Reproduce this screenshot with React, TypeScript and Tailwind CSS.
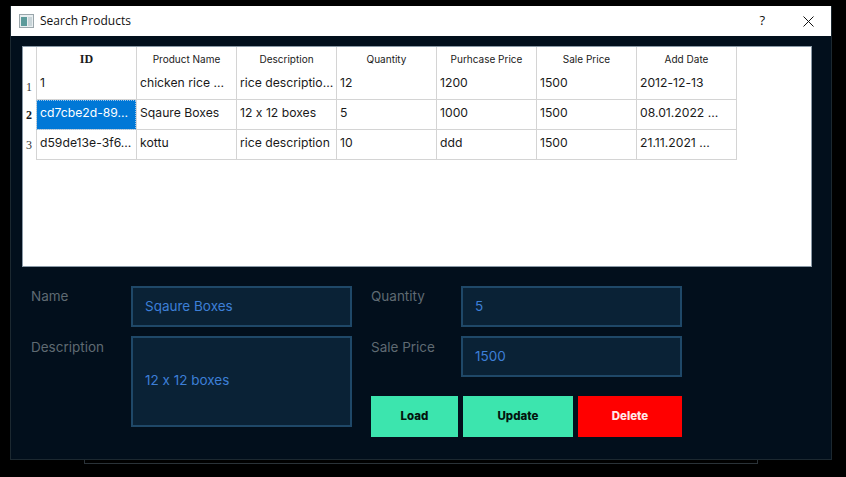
import React from 'react';

const HEADERS = ['ID', 'Product Name', 'Description', 'Quantity', 'Purhcase Price', 'Sale Price', 'Add Date'];

const ROWS = [
  ['1', 'chicken rice …', 'rice descriptio…', '12', '1200', '1500', '2012-12-13'],
  ['cd7cbe2d-89…', 'Sqaure Boxes', '12 x 12 boxes', '5', '1000', '1500', '08.01.2022 …'],
  ['d59de13e-3f6…', 'kottu', 'rice description', '10', 'ddd', '1500', '21.11.2021 …'],
];

const ProductTable: React.FC = () => (
  <div className="h-[221px] bg-white border border-[#8a99a6] pl-[13px] text-[#1a1a1a]">
    <div className="flex h-[23px] text-[10px] leading-[25px]">
      {HEADERS.map((h, i) => (
        <div
          key={h}
          className={`w-[100px] text-center border-l border-[#d4d4d4] ${i === 0 ? "font-bold font-['Liberation_Serif',serif] text-[12px]" : ''}`}
        >
          {h}
        </div>
      ))}
      <div className="w-0 border-l border-[#d4d4d4]" />
    </div>
    {ROWS.map((row, r) => (
      <div key={row[0]} className="relative flex h-[30px] text-[12.2px] leading-[26px]">
        <span
          className={`absolute -left-[10px] leading-[18px] font-['Liberation_Serif',serif] text-[12px] ${r === 1 ? 'font-bold top-[6px]' : r === 0 ? 'top-[8px] text-[#333]' : 'top-[6px] text-[#333]'}`}
        >
          {r + 1}
        </span>
        {row.map((cell, c) => {
          const selected = r === 1 && c === 0;
          return (
            <div
              key={c}
              className={`w-[100px] pl-[3px] whitespace-nowrap border-l border-b border-[#d4d4d4] ${selected ? 'bg-[#0078d7] text-white outline-1 outline-dotted outline-[#9cc4e8] -outline-offset-1' : ''}`}
            >
              {cell}
            </div>
          );
        })}
        <div className="w-0 border-l border-[#d4d4d4]" />
      </div>
    ))}
  </div>
);

const Field: React.FC<{ label: string; value: string; tall?: boolean; lower?: boolean }> = ({ label, value, tall, lower }) => (
  <div className={`flex ${tall ? 'h-[91px]' : 'h-[41px]'}`}>
    <div className={`text-[13.5px] text-[#5f6a72] leading-[20px] w-[100px] ${lower ? 'pt-[1px]' : ''}`}>{label}</div>
    <div className={`w-[221px] flex items-center pl-[12px] text-[13.5px] text-[#3d7fd6] bg-[#0a2236] border-2 border-[#1f4868] ${tall ? 'pb-[2px]' : ''}`}>
      {value}
    </div>
  </div>
);

const App: React.FC = () => {
  return (
    <div className="w-[846px] h-[477px] bg-black pt-[6px] font-['Inter',sans-serif] [font-feature-settings:'calt'_0] overflow-hidden">
      <div className="ml-[10px] w-[822px] h-[454px] flex flex-col border-l border-r border-b border-[#1c2830] bg-[#020f1c]">
        <div className="h-[30px] shrink-0 bg-white flex items-center pl-[8px] pr-[17px] font-['Open_Sans',sans-serif] text-[12px] text-[#111]">
          <svg width="15" height="14" viewBox="0 0 15 14" className="mr-[6px]">
            <rect x="0.5" y="0.5" width="14" height="13" fill="#e8eef0" stroke="#9aa6ab" />
            <rect x="2" y="3" width="6" height="9" fill="#5b9a9a" />
            <rect x="9" y="3" width="4" height="9" fill="#c8d4d8" />
          </svg>
          <span className="flex-1">Search Products</span>
          <span className="mr-[38px] text-[13px]">?</span>
          <svg width="11" height="11" viewBox="0 0 11 11" stroke="#111" strokeWidth="1">
            <path d="M0.5 0.5L10.5 10.5M10.5 0.5L0.5 10.5" />
          </svg>
        </div>
        <div className="flex-1 pl-[11px] pr-[19px] pt-[10px]">
          <ProductTable />
          <div className="flex pt-[19px] pl-[9px] gap-[19px]">
            <div className="flex flex-col gap-[9px]">
              <Field label="Name" value="Sqaure Boxes" />
              <Field label="Description" value="12 x 12 boxes" tall lower />
            </div>
            <div className="flex flex-col gap-[9px] w-[311px]">
              <div className="[&>div>div:first-child]:w-[90px] flex flex-col gap-[9px]">
                <Field label="Quantity" value="5" />
                <Field label="Sale Price" value="1500" lower />
              </div>
              <div className="flex gap-[5px] mt-[10px] h-[41px] text-[11.5px] font-extrabold">
                <button className="w-[87px] bg-[#3ce5ae] text-[#04140e]">Load</button>
                <button className="w-[110px] bg-[#3ce5ae] text-[#04140e]">Update</button>
                <button className="w-[104px] bg-[#ff0000] text-[#ffe8e8]">Delete</button>
              </div>
            </div>
          </div>
        </div>
      </div>
      <div className="ml-[84px] w-[674px] h-[4px] border-l border-r border-b border-[#2a3238]" />
    </div>
  );
};

export default App;
